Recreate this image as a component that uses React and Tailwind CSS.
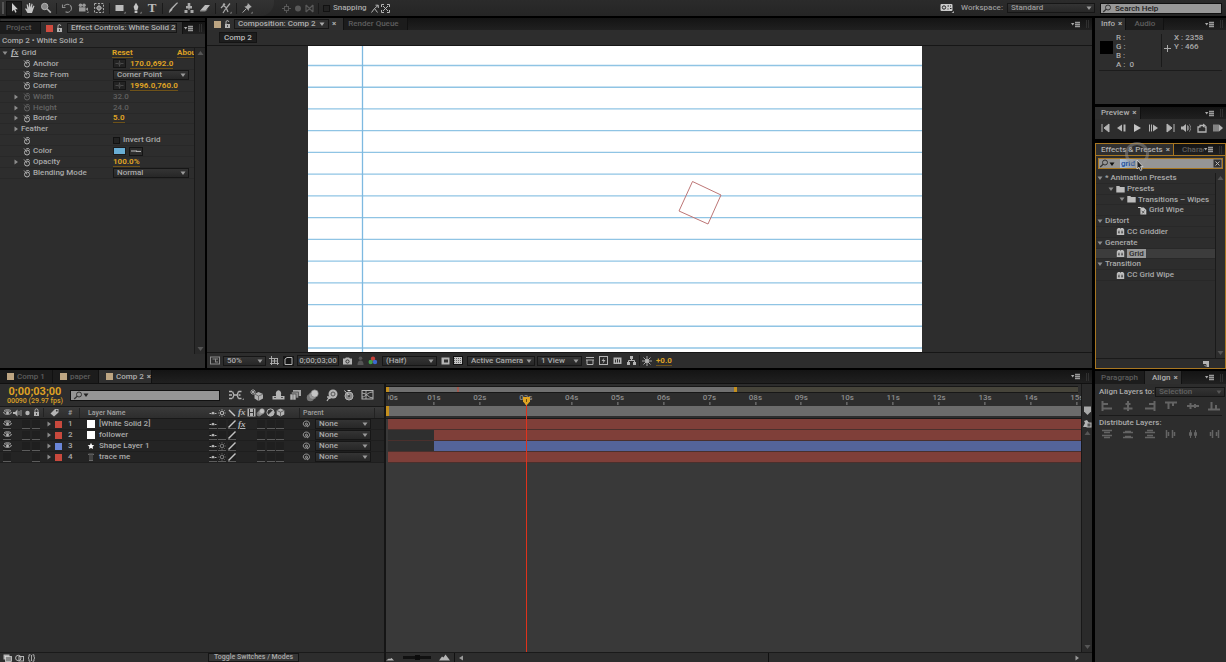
import React, { useState } from "react";

const Svg = ({ w = 12, h = 12, className = "", children }) => (
  <svg width={w} height={h} viewBox={`0 0 ${w} ${h}`} className={`shrink-0 ${className}`} fill="none" stroke="none" aria-hidden="true">
    {children}
  </svg>
);

const C = "#b4b4b4";

// ---------- small shared icons ----------
const Tri = ({ open, color = "#8c8c8c" }) => (
  <Svg w={6} h={6}>{open ? <path d="M0.5 1.5h5L3 5z" fill={color} /> : <path d="M1.5 0.5v5L5 3z" fill={color} />}</Svg>
);
const Up = () => <Svg w={7} h={6}><path d="M0.5 5h6L3.5 1z" fill="#555" /></Svg>;
const Down = () => <Svg w={7} h={6}><path d="M0.5 1h6L3.5 5z" fill="#555" /></Svg>;
const Watch = ({ dim }) => (
  <Svg w={8} h={9} className={dim ? "opacity-40" : ""}>
    <circle cx="4" cy="5.5" r="2.5" stroke={C} />
    <path d="M4 5.5L3 4M1 1.5l1.8 1.8M3.3 1.6h2.6M6.2 2.4l.8.8" stroke={C} strokeWidth="0.9" />
  </Svg>
);
const Target = () => (
  <span className="flex h-[9px] w-[13px] shrink-0 items-center justify-center border border-[#141414] bg-[#232323]">
    <Svg w={9} h={7}><path d="M0.5 3.5h8M4.5 0.5v6" stroke="#4a4a4a" /><circle cx="4.5" cy="3.5" r="1.5" fill="#414141" /></Svg>
  </span>
);
const Lock = ({ closed }) => (
  <Svg w={7} h={9}>
    <rect x="1" y="4" width="5" height="4" fill={C} />
    <path d={closed ? "M2 4V2.4a1.5 1.5 0 0 1 3 0V4" : "M2 4V2.2a1.4 1.4 0 0 1 2.8-.3"} stroke={C} />
    <path d="M3.5 5v2" stroke="#333" strokeWidth="0.8" />
  </Svg>
);
const MenuIcon = () => (
  <Svg w={9} h={7}><path d="M0 2h3.4L1.7 4.4z" fill="#aaa" /><path d="M4 1.5h5M4 3.5h5M4 5.5h5" stroke="#999" strokeWidth="1.6" /></Svg>
);
const Search = () => (
  <Svg w={10} h={9}><circle cx="6" cy="3.5" r="2.5" stroke="#333" /><path d="M4.2 5.2L1.2 8" stroke="#333" strokeWidth="1.2" /></Svg>
);
const Eye = () => (
  <Svg w={9} h={7}>
    <path d="M0.5 3.8C2.5 1.2 6.5 1.2 8.5 3.8 6.5 6 2.5 6 .5 3.8z" stroke={C} strokeWidth="0.9" />
    <circle cx="4.5" cy="3.7" r="1.5" fill={C} /><path d="M1 1.6C3 .4 6 .4 8 1.6" stroke={C} strokeWidth="0.8" />
  </Svg>
);
const Shy = () => <Svg w={8} h={7}><path d="M0.5 4.5h1.5M6 4.5h1.5" stroke={C} /><path d="M2.4 4.6a1.6 1.8 0 0 1 3.2 0v.6H2.4z" fill={C} /></Svg>;
const Sun = ({ dim }) => (
  <Svg w={8} h={8}>
    <circle cx="4" cy="4" r="1.7" stroke={dim ? "#777" : C} strokeWidth="1.1" />
    <path d="M4 .2v1.2M4 6.6v1.2M.2 4h1.2M6.6 4h1.2M1.3 1.3l.7.7M6 6l.7.7M1.3 6.7L2 6M6 2l.7-.7" stroke={dim ? "#777" : C} strokeWidth="0.8" />
  </Svg>
);
const Fx = ({ u }) => (
  <span className={`font-['Liberation_Serif',serif] text-[9px] leading-[9px] font-bold italic text-[#b4b4b4] ${u ? "underline" : ""}`}>fx</span>
);
const Cube = () => (
  <Svg w={9} h={9}>
    <path d="M4.5 .5L8.3 2.3v4.2L4.5 8.5.7 6.5V2.3z" fill={C} /><path d="M.9 2.4l3.6 1.8 3.6-1.8M4.5 4.2v4.2" stroke="#444" strokeWidth="0.7" />
  </Svg>
);
const Blur = ({ size = 9 }) => (
  <svg width={size} height={size} viewBox="0 0 12 12" className="shrink-0">
    <circle cx="4" cy="8" r="3.3" fill="#777" /><circle cx="6" cy="6.2" r="3.3" fill="#999" stroke="#666" strokeWidth="0.5" /><circle cx="8" cy="4.2" r="3.4" fill="#c4c4c4" stroke="#666" strokeWidth="0.5" />
  </svg>
);
const Film = () => (
  <Svg w={9} h={9}><rect x="0.5" y="0.5" width="8" height="8" fill={C} /><path d="M2.5 1v7M6.5 1v7" stroke="#333" /><path d="M3 4.5h3" stroke="#333" /></Svg>
);
const Frames = () => (
  <Svg w={13} h={12}><rect x="4" y="1" width="8" height="6" fill="#a8a8a8" /><rect x="2.5" y="3" width="7" height="6" fill="#929292" stroke="#333" strokeWidth="0.6" /><rect x="1" y="5" width="6" height="6" fill="#b5b5b5" stroke="#333" strokeWidth="0.6" /><path d="M4 5v6" stroke="#555" strokeWidth="0.6" /></Svg>
);
const Swirl = () => (
  <Svg w={9} h={8}><path d="M5.2 4.6a1 1 0 1 1-.4-1.5c1.3.8.8 3-1 3.1C.7 6.3.4 2 3.4 1.2 6.3.5 8.4 3 7.2 5.4L5 7" stroke="#aaa" strokeWidth="0.9" /></Svg>
);
const FxFile = () => (
  <Svg w={9} h={9}><path d="M0.8 2.5L2 1h2l.5 1L5 1h2l1.2 1.5V8H.8z" fill="#bdbdbd" /><path d="M3 3.6v3M6 3.6v3M2 5.2h1.5M5.3 5.2H7" stroke="#3a3a3a" strokeWidth="0.8" /></Svg>
);
const Folder = () => <Svg w={9} h={8}><path d="M0.3 7.5V1h3l.8 1h4.6v5.5z" fill="#bdbdbd" /></Svg>;
const PresetFile = () => (
  <Svg w={9} h={9}><path d="M2.4 1.5h3.4L8.3 4v4.6H2.4z" fill="#c4c4c4" /><path d="M3.6 5l2.8 2M6.6 4.4L4 7.6" stroke="#444" strokeWidth="0.8" /><path d="M0 1.5h3" stroke="#ccc" /></Svg>
);
const Chip = ({ c = "bg-[#bda582]" }) => <span className={`h-[7px] w-[7px] shrink-0 ${c}`} />;

// ---------- shared controls ----------
const Select = ({ label, options, className = "", dim }) => (
  <span className={`relative flex h-[10px] items-center border border-[#161616] bg-linear-to-b from-[#343434] to-[#272727] ${className}`}>
    <select aria-label={label} className={`h-full w-full appearance-none bg-transparent pl-[3px] leading-[8px] outline-none ${dim ? "text-[#626262]" : ""}`}>
      {options.map((o) => <option key={o}>{o}</option>)}
    </select>
    <span className="pointer-events-none absolute right-[2px]"><Tri open color={dim ? "#555" : "#9a9a9a"} /></span>
  </span>
);

const PanelEnd = () => (
  <span className="ml-auto flex items-center gap-[6px] pr-[3px]">
    <button aria-label="Panel menu" className="flex"><MenuIcon /></button>
    <span className="h-[8px] w-[3px] border-x border-[#303030]" />
  </span>
);

const TabBar = ({ children, className = "" }) => (
  <div className={`flex h-[12px] shrink-0 items-stretch bg-linear-to-b from-[#141414] to-[#202020] ${className}`}>{children}</div>
);

const Tab = ({ active, children, className = "" }) => (
  <button className={`flex shrink-0 items-center gap-[3px] whitespace-nowrap border-r border-[#111] ${active ? "bg-[#2f2f2f] text-[#b0b0b0]" : "bg-[#1c1c1c] text-[#5e5e5e]"} ${className}`}>
    {children}
  </button>
);

const X = () => <span className="font-bold">×</span>;

// ---------- toolbar ----------
const tools = [
  ["Selection", <path d="M4 1v8.5l2-1.8 1.3 3 1.3-.6-1.3-2.9h2.6z" fill="#ccc" />],
  ["Hand", <path d="M3.5 11L1 6.8l1-.6 1.4 1.4L2.6 2.5l1-.2 1.1 3.4L5 1h1.1l.3 4.6L7.6 1.6l1 .3-.7 4.3 1.7-2.6.9.5L8.9 8.5 8 11z" fill="#c4c4c4" />],
  ["Zoom", <><circle cx="4.7" cy="4.5" r="3.2" fill="#888" stroke={C} /><path d="M7.2 7l3.6 3.6" stroke={C} strokeWidth="1.6" /></>],
  null,
  ["Rotation", <path d="M3 4.2A4 4 0 1 1 4.5 9.8M1.5 2.5v3h3" stroke="#8c8c8c" strokeWidth="1.1" strokeDasharray="6 .8" />],
  ["Camera", <><circle cx="3.5" cy="3.3" r="1.8" fill="#999" /><circle cx="7" cy="3.3" r="1.8" fill="#999" /><path d="M2 5.2h6.5v4.3H2zM8.5 7L11 5.5v3.6z" fill="#999" /><path d="M9.5 11h2V9z" fill="#888" /></>],
  ["Pan Behind", <><rect x="1.5" y="1.5" width="9" height="9" stroke="#aaa" strokeDasharray="2 1.4" /><circle cx="6" cy="6" r="2" stroke="#bbb" /><path d="M6 2.6v6.8M2.6 6h6.8" stroke="#bbb" strokeWidth="0.7" /></>],
  null,
  ["Rectangle", <><rect x="1.5" y="3" width="8" height="6" fill="#bbb" /><path d="M9.7 11.4h2v-2z" fill="#888" /></>],
  ["Pen", <><path d="M6 .8l2.4 4L7.4 8H4.6L3.6 4.8zM4.6 8.6h2.8V11H4.6z" fill="#c4c4c4" /><path d="M9.7 11.4h2v-2z" fill="#888" /></>],
  ["Type", null],
  null,
  ["Brush", <path d="M10.6 1L5.5 6.6 4.6 8.5l-2.4 2 .8-2.8 1.5-1.6L10 .6z" fill="#bbb" stroke="#bbb" strokeWidth="0.5" />],
  ["Clone Stamp", <path d="M4.7 1h2.6v3H9v2.5H3V4h1.7zM5.5 6h1v2h-1zM1.5 8h3v3h-3zM7.5 8h3v3h-3z" fill="#aaa" />],
  ["Eraser", <><path d="M1 8.8L6 3h5L6.5 8.8z" fill="#bbb" /><path d="M1 9h5.5L8 7.4" stroke="#888" /></>],
  null,
  ["Roto Brush", <><path d="M10 1.5L5.5 7 3 11M3.4 3.5L6 5.5 8 10M1 6l2.4-2.5" stroke="#aaa" strokeWidth="1.2" /><circle cx="4" cy="2.4" r="1.2" fill="#aaa" /><path d="M9.7 11.4h2v-2z" fill="#888" /></>],
  null,
  ["Puppet Pin", <><path d="M6.8 1l4 4-1.4.4-1.6 1.7.2 1.8L3.4 4.4l1.8-.1 1.4-1.6z" fill="#aaa" /><path d="M5 7L1.6 10.6" stroke="#aaa" /><path d="M9.7 11.4h2v-2z" fill="#888" /></>],
];

const Toolbar = () => (
  <header className="flex h-[17px] shrink-0 items-center border-b border-black bg-linear-to-b from-[#2b2b2b] to-[#252525]">
    <div className="flex h-full w-[274px] shrink-0 items-center rounded-br-[14px] bg-linear-to-b from-[#333] to-[#2a2a2a]">
      <span className="mr-[2px] ml-[2px] h-[12px] w-[2px] bg-[#555]" />
      {tools.map((t, i) =>
        t ? (
          <button key={i} aria-label={t[0]} className={`flex h-[15px] w-[16px] items-center justify-center ${i === 0 ? "border border-[#111] bg-[#1b1b1b]" : ""}`}>
            {t[1] ? <Svg>{t[1]}</Svg> : <span className="font-['Liberation_Serif',serif] text-[13px] leading-[12px] font-bold text-[#bbb]">T</span>}
          </button>
        ) : (
          <span key={i} className="mx-[2px] h-[11px] w-px bg-[#1a1a1a]" />
        )
      )}
    </div>
    <div className="flex items-center gap-[3px] pl-[8px] opacity-35">
      <Svg w={9} h={9}><path d="M4.5 0v9M0 4.5h9" stroke={C} /><rect x="2.5" y="2.5" width="4" height="4" fill="#333" stroke={C} /></Svg>
      <Svg w={8} h={9}><circle cx="4" cy="4.5" r="3" fill={C} /></Svg>
      <Svg w={9} h={9}><path d="M1 1v7M8 1v7M1 1l7 7M8 1L1 8" stroke={C} strokeWidth="1.2" /></Svg>
    </div>
    <span className="mx-[4px] h-[11px] w-px bg-[#1a1a1a]" />
    <label className="flex items-center gap-[3px]">
      <input type="checkbox" className="h-[7px] w-[7px] appearance-none border border-[#111] bg-[#222] checked:bg-[#999]" />
      Snapping
    </label>
    <div className="flex gap-[2px] pl-[4px]">
      <Svg w={8} h={9}><path d="M0.5 8.5l3-4 3 4M3.5 4.5L7 1.5M4.5 1.2h2.8V4" stroke={C} /></Svg>
      <Svg w={9} h={9}><path d="M0.5 3V.5H3M6 .5h2.5V3M8.5 6v2.5H6M3 8.5H.5V6M2 2l5 5M7 2L2 7" stroke={C} /></Svg>
    </div>
    <div className="ml-auto flex items-center pr-[4px] text-[#9a9a9a]">
      <Svg w={14} h={10}><rect x="0.5" y="1" width="12" height="7" rx="1" fill="#ccc" /><circle cx="4" cy="4.5" r="1.7" stroke="#222" /><path d="M7.5 3h1.5M10 5.5h1.5M10 3h1M7.5 6h1" stroke="#222" /><path d="M11.5 10H14V8z" fill="#aaa" /></Svg>
      <span className="pr-[4px] pl-[7px]">Workspace:</span>
      <Select label="Workspace" options={["Standard", "Animation", "Effects"]} className="w-[88px]" />
      <label className="ml-[5px] flex h-[11px] w-[122px] items-center border border-[#111] bg-[#989898] pl-px">
        <Search />
        <input aria-label="Search Help" placeholder="Search Help" className="w-full pl-[3px] leading-[9px] outline-none placeholder:text-[#1c1c1c]" />
      </label>
    </div>
  </header>
);

// ---------- effect controls ----------
const Val = ({ children, dim }) => (
  <button className={dim ? "text-[#606060]" : "border-b border-[#6e5219] leading-[9px] font-bold text-[#dda125]"}>{children}</button>
);

const effectRows = [
  { name: "Anchor", watch: true, value: <><Target /><span className="w-[4px]" /><Val>170.0,692.0</Val></> },
  { name: "Size From", watch: true, value: <Select label="Size From" options={["Corner Point", "Width Slider"]} className="w-[76px]" /> },
  { name: "Corner", watch: true, value: <><Target /><span className="w-[4px]" /><Val>1996.0,760.0</Val></> },
  { name: "Width", watch: true, tri: true, dim: true, value: <Val dim>32.0</Val> },
  { name: "Height", watch: true, tri: true, dim: true, value: <Val dim>24.0</Val> },
  { name: "Border", watch: true, tri: true, value: <Val>5.0</Val> },
  { name: "Feather", tri: true },
  {
    name: "", watch: true,
    value: (
      <label className="flex items-center gap-[3px]">
        <input type="checkbox" className="h-[7px] w-[7px] appearance-none border border-[#111] bg-[#222] checked:bg-[#999]" />
        Invert Grid
      </label>
    ),
  },
  {
    name: "Color", watch: true,
    value: (
      <>
        <input type="button" aria-label="Color" className="h-[8px] w-[13px] border border-[#1b1b1b] bg-[#69aed5]" />
        <button aria-label="Eyedropper" className="ml-[3px] flex h-[9px] w-[14px] items-center justify-center border border-[#141414]">
          <Svg w={10} h={4}><path d="M0 2h6M5 2.4h5" stroke="#bbb" /></Svg>
        </button>
      </>
    ),
  },
  { name: "Opacity", watch: true, tri: true, value: <Val>100.0%</Val> },
  { name: "Blending Mode", watch: true, value: <Select label="Blending Mode" options={["Normal", "Add", "Multiply"]} className="w-[76px]" /> },
];

const EffectControls = () => (
  <section className="flex w-[205px] shrink-0 flex-col bg-[#2d2d2d]">
    <div className="h-[4px] border-b border-black bg-[#151515] pt-px"><div className="h-[2px] w-[190px] rounded-full bg-[#353535]" /></div>
    <TabBar>
      <Tab className="w-[41px] px-[6px]">Project</Tab>
      <Tab active className="px-[5px]">
        <Chip c="bg-[#cf4b3f]" /><Lock />
        <span className="ml-px flex h-[10px] w-[110px] items-center border border-[#161616] pl-[3px]">Effect Controls: White Solid 2</span>
      </Tab>
      <PanelEnd />
    </TabBar>
    <div className="flex h-[14px] items-center border-b border-[#1a1a1a] pl-[2px]">Comp 2 • White Solid 2</div>
    <div className="flex flex-1">
      <div className="flex-1 overflow-hidden">
        <div className="grid h-[131px] grid-rows-12">
          <div className="flex items-center border-b border-[#282828] bg-[#2a2a2a] pl-[2px]">
            <span className="flex w-[110px] items-center gap-[3px]"><Tri open /><Fx u /><span>Grid</span></span>
            <Val>Reset</Val>
            <span className="ml-auto w-[17px] overflow-hidden"><Val>About...</Val></span>
          </div>
          {effectRows.map((r, i) => (
            <div key={i} className={`flex items-center border-b border-[#282828] pl-[13px] ${r.dim ? "text-[#646464]" : ""}`}>
              <span className="flex w-[100px] shrink-0 items-center whitespace-nowrap">
                <span className="flex w-[8px]">{r.tri && <Tri />}</span>
                {r.watch && <span className="flex w-[12px] pl-[2px]"><Watch dim={r.dim} /></span>}
                <span>{r.name}</span>
              </span>
              {r.value}
            </div>
          ))}
        </div>
      </div>
      <div className="mb-[14px] flex w-[11px] flex-col items-center justify-between border-l border-[#1a1a1a] bg-[#292929] py-[2px]"><Up /><Down /></div>
    </div>
  </section>
);

// ---------- composition viewer ----------
const lines = Array.from({ length: 14 }, (_, i) => 19.5 + i * 21.73);

const CompViewer = () => (
  <section className="flex min-w-0 flex-1 flex-col bg-[#2d2d2d]">
    <TabBar>
      <Tab active className="px-[7px]">
        <Chip /><Lock />
        <span className="flex h-[10px] w-[95px] items-center justify-between border border-[#161616] px-[3px]">Composition: Comp 2<Tri open color="#aaa" /></span>
        <X />
      </Tab>
      <Tab className="w-[64px] pl-[4px]">Render Queue</Tab>
      <PanelEnd />
    </TabBar>
    <div className="flex h-[16px] shrink-0 items-center border-b border-[#161616] pl-[12px]">
      <button className="h-[11px] w-[38px] border border-[#141414] bg-[#1d1d1d] leading-[9px] text-[#bbb]">Comp 2</button>
    </div>
    <div className="flex-1 overflow-hidden pl-[101px]">
      <svg width="614" height="306" viewBox="0 0 614 306" className="bg-white" role="img" aria-label="Lined paper">
        {lines.map((y) => <path key={y} d={`M0 ${y}H614`} stroke="#8fc4e4" strokeWidth="1.3" />)}
        <path d="M54.5 0V306" stroke="#7db9e0" strokeWidth="1.3" />
        <path d="M384.5 135.5L413 149 400 178 371 165z" fill="none" stroke="#bd7676" />
      </svg>
    </div>
    <div className="flex h-[16px] shrink-0 items-center border-t border-[#161616] pl-[3px]">
      <Svg w={10} h={9}><rect x="0.5" y="1" width="9" height="7" stroke="#8a8a8a" /><path d="M2.5 3h3v3M5 3h3M5 6h3" stroke="#8a8a8a" /></Svg>
      <Select label="Magnification" options={["50%", "100%"]} className="ml-[3px] w-[43px]" />
      <span className="flex items-center gap-[3px] px-[3px]">
        <Svg w={11} h={10}><path d="M0 2.5h9M2.5 0v9M8.5 2v7M1 7.5h9M5.5 3v4M3 5h5" stroke={C} strokeWidth="0.9" /></Svg>
        <Svg w={11} h={10}><rect width="11" height="10" fill="#161616" /><path d="M2 8.5V3L4 1.5h5v7z" stroke={C} /></Svg>
      </span>
      <button className="h-[11px] w-[42px] border border-[#161616] leading-[9px]">0;00;03;00</button>
      <span className="flex w-[43px] items-center justify-between px-[4px]">
        <Svg w={9} h={8}><path d="M0 1.5h2L3 .5h3l1 1h2v6H0z" fill={C} /><circle cx="4.5" cy="4.5" r="1.6" fill={C} stroke="#333" /></Svg>
        <Svg w={7} h={9}><circle cx="3.5" cy="2.3" r="1.8" fill="#555" /><path d="M0.5 9c0-3 .8-4.5 3-4.5S6.5 6 6.5 9z" fill="#555" /></Svg>
        <Svg w={10} h={9}><circle cx="5" cy="2.8" r="2.2" fill="#c8423a" /><circle cx="2.7" cy="6" r="2.2" fill="#43a04b" /><circle cx="7" cy="6" r="2.2" fill="#3e68cf" /></Svg>
      </span>
      <Select label="Resolution" options={["(Half)", "Full"]} className="w-[55px]" />
      <span className="flex w-[30px] items-center justify-between px-[4px]">
        <Svg w={9} h={8}><rect x="0.5" y="0.5" width="8" height="7" fill={C} /><rect x="3" y="2.5" width="4" height="3" fill="#333" /></Svg>
        <Svg w={10} h={9}>
          <rect width="10" height="9" fill="#111" /><rect x="1" y="1" width="8" height="7" fill="#c4c4c4" />
          <path d="M1 2.5h8M1 4.5h8M1 6.5h8" stroke="#666" strokeDasharray="1 1" />
        </Svg>
      </span>
      <Select label="3D View" options={["Active Camera", "Front"]} className="w-[68px]" />
      <Select label="View Layout" options={["1 View", "2 Views"]} className="ml-[2px] w-[45px]" />
      <span className="flex w-[57px] items-center justify-between pr-[3px] pl-[4px]">
        <Svg w={8} h={9}><path d="M0 1.5h8M0 4h8M1 4v4.5h6V4" stroke={C} /></Svg>
        <Svg w={9} h={9}><rect x="0.5" y="0.5" width="8" height="8" stroke={C} /><path d="M5.5 1.5L2.5 5h2L3.5 8l3-4h-2z" fill={C} /></Svg>
        <Svg w={9} h={9}><rect x="0.5" y="1.5" width="8" height="6.5" fill={C} /><path d="M2.5 3.5v3M4.5 3v3.5M6.5 3.5v3" stroke="#333" /></Svg>
        <Svg w={9} h={9}><path d="M3 0h3v3H3zM0 6h3v3H0zM6 6h3v3H6z" fill={C} /><path d="M4.5 3v1.5M1.5 6V4.5h6V6" stroke={C} /></Svg>
      </span>
      <span className="mr-[2px] h-[11px] w-px bg-[#1a1a1a]" />
      <Svg w={10} h={10}><circle cx="5" cy="5" r="2" fill={C} /><path d="M5 0v10M0 5h10M1.5 1.5l7 7M8.5 1.5l-7 7" stroke={C} strokeWidth="0.9" /></Svg>
      <span className="flex pl-[4px]"><Val>+0.0</Val></span>
    </div>
  </section>
);

// ---------- timeline ----------
const layers = [
  { n: 1, name: "[White Solid 2]", label: "bg-[#c8493d]", bar: "bg-[#7f3f39]", icon: "solid", eye: true, fx: true, start: 0 },
  { n: 2, name: "follower", label: "bg-[#c8493d]", bar: "bg-[#7f3f39]", icon: "solid", eye: true, start: 1 },
  { n: 3, name: "Shape Layer 1", label: "bg-[#6a86d8]", bar: "bg-[#54649a]", icon: "star", eye: true, sun: true, start: 1 },
  { n: 4, name: "trace me", label: "bg-[#c8493d]", bar: "bg-[#7f3f39]", icon: "text", sun: true, start: 0 },
];
const DURATION = 15.09;
const pct = (s) => `${(s / DURATION) * 100}%`;

const Slot = ({ children }) => (
  <span className="flex h-[9px] w-[8px] items-center justify-center border-b border-[#5c5c5c] bg-[#1f1f1f]">{children}</span>
);
const Slash = ({ back }) => <Svg w={8} h={8}><path d={back ? "M1 1l6 6" : "M0.5 7.5l7-7"} stroke="#c4c4c4" strokeWidth="1.4" /></Svg>;

const LayerTable = () => (
  <table className="w-full table-fixed border-collapse text-left">
    <colgroup>
      <col className="w-[43px]" /><col className="w-[22px]" /><col className="w-[14px]" /><col className="w-[127px]" /><col className="w-[93px]" /><col />
    </colgroup>
    <thead className="bg-linear-to-b from-[#3a3a3a] to-[#2c2c2c] text-[7px] text-[#a0a0a0]">
      <tr className="h-[12px] border-y border-[#181818]">
        <th className="p-0" aria-label="Video, audio, solo, lock">
          <span className="flex items-center gap-px pl-[3px]">
            <Eye />
            <Svg w={9} h={8}><path d="M0 3h2l2.5-2.5v7L2 5H0z" fill={C} /><path d="M6 2v4M8 1v6" stroke={C} strokeWidth="0.8" /></Svg>
            <Svg w={9} h={8}><circle cx="4.5" cy="4" r="2.2" fill={C} /></Svg>
            <Lock closed />
          </span>
        </th>
        <th className="p-0" aria-label="Label">
          <span className="flex justify-center border-l border-[#222]"><Svg w={9} h={9}><path d="M0.5 5.5L5 1h3.5v3.5L4 8.5z" fill={C} /><circle cx="6.8" cy="2.7" r="0.9" fill="#333" /></Svg></span>
        </th>
        <th className="p-0 pl-[3px] font-medium">#</th>
        <th className="p-0 font-medium"><span className="block border-l border-[#222] pl-[8px]">Layer Name</span></th>
        <th className="p-0" aria-label="Switches">
          <span className="ml-[2px] grid w-[77px] grid-cols-8 items-center justify-items-center">
            <Shy /><Sun /><Slash back /><Fx /><Film /><Blur />
            <Svg w={9} h={9}><circle cx="4.5" cy="4.5" r="3.6" fill="#333" stroke={C} /><path d="M2 7L7 2A3.5 3.5 0 0 1 2 7z" fill={C} /></Svg>
            <Cube />
          </span>
        </th>
        <th className="p-0 font-medium"><span className="mr-[9px] block border-x border-[#222] pl-[3px]">Parent</span></th>
      </tr>
    </thead>
    <tbody>
      {layers.map((l) => (
        <tr key={l.n} className="h-[11px] border-b border-[#1e1e1e] bg-[#242424]">
          <td className="p-0">
            <span className="flex pl-[3px]"><Slot>{l.eye && <Eye />}</Slot><span className="w-[11px]" />{l.n === 4 ? <span className="w-[8px]" /> : <Slot />}<span className="w-[2px]" /><Slot /></span>
          </td>
          <td className="p-0"><span className="flex items-center gap-[3px] pl-[3px]"><Tri /><Chip c={l.label} /></span></td>
          <td className="p-0 pl-[3px]">{l.n}</td>
          <td className="p-0">
            <span className="flex items-center pl-[8px]">
              <span className="flex w-[12px]">
                {l.icon === "solid" && <span className="h-[8px] w-[8px] bg-white" />}
                {l.icon === "star" && <Svg w={8} h={8}><path d="M4 .8l1 2.2 2.3.2-1.7 1.6.5 2.3L4 5.9 1.9 7.1l.5-2.3L.7 3.2 3 3z" fill="#fff" /></Svg>}
                {l.icon === "text" && <Svg w={8} h={8}><path d="M1.5 2V1h5v1M3 1v6.5M5 1v6.5M2 7.5h4" stroke="#777" strokeWidth="0.8" /></Svg>}
              </span>
              {l.name}
            </span>
          </td>
          <td className="p-0">
            <span className="ml-[2px] grid w-[77px] grid-cols-8 items-center justify-items-center">
              <Slot><Shy /></Slot><Slot>{l.sun && <Sun dim />}</Slot><Slot><Slash /></Slot>
              {l.fx ? <Fx u /> : <span />}<span /><Slot /><Slot /><Slot />
            </span>
          </td>
          <td className="p-0">
            <span className="flex items-center gap-[4px] pl-[3px]"><Swirl /><Select label={`Parent of ${l.name}`} options={["None"]} className="w-[56px]" /></span>
          </td>
        </tr>
      ))}
    </tbody>
  </table>
);

const Timeline = () => {
  const [query, setQuery] = useState("");

  return (
    <section className="flex min-h-0 flex-1 flex-col bg-[#2d2d2d]">
      <TabBar className="!h-[14px] border-b border-[#111]">
        <Tab className="w-[53px] pl-[7px]"><Chip />Comp 1</Tab>
        <Tab className="w-[46px] pl-[7px]"><Chip />paper</Tab>
        <Tab active className="w-[53px] pl-[7px]"><Chip />Comp 2<X /></Tab>
        <PanelEnd />
      </TabBar>
      <div className="flex min-h-0 flex-1">
        <div className="flex w-[384px] shrink-0 flex-col">
          <div className="flex h-[22px] shrink-0 items-center">
            <button className="flex w-[70px] flex-col items-center text-[#dda125]">
              <span className="text-[11px] leading-[11px] font-bold">0;00;03;00</span>
              <span className="text-[7px] leading-[8px]">00090 (29.97 fps)</span>
            </button>
            <label className="flex h-[11px] w-[150px] items-center border border-[#111] bg-[#959595] pl-[2px]">
              <Search /><Tri open color="#222" />
              <input aria-label="Search layers" value={query} onChange={(e) => setQuery(e.target.value)} className="w-full text-[#111] outline-none" />
            </label>
            <span className="flex flex-1 items-center pl-[8px]">
              <Svg w={16} h={12}><path d="M1 2.500h3M1 6h3M1 9.5h3M4.5 2.5L6 6h3l1.5-3.5M4.5 9.5L6 6M9 6l1.5 3.5M10.5 2.5h3M10.5 6h2M10.5 9.5h3" stroke={C} strokeWidth="1.3" /><path d="M14 11h2V9z" fill="#888" /></Svg>
              <span className="flex w-[25px] justify-center"><Svg w={14} h={12}><path d="M3 0v6M0 3h6M1 1l4 4M5 1L1 5" stroke={C} strokeWidth="0.8" /><path d="M8.5 3L13 5v4.5L8.5 12 4.5 9.5V5z" fill="#b0b0b0" /><path d="M5 5.2L8.5 7 13 5.2M8.5 7v5" stroke="#555" strokeWidth="0.7" /></Svg></span>
              <span className="ml-[3px] flex items-center gap-[4px]">
                <Svg w={13} h={12}><path d="M4 6a2.7 3.5 0 1 1 5 0v1H4z" fill={C} /><path d="M0.5 7h12v3.5H.5z" fill={C} /><path d="M2 8.5h2M9 8.5h2" stroke="#555" /></Svg>
                <Frames />
                <Blur size={13} />
              </span>
              <span className="ml-[6px] flex items-center gap-[4px]">
                <Svg w={14} h={13}><circle cx="8" cy="5" r="4.5" fill={C} /><circle cx="8" cy="5" r="2" stroke="#555" /><path d="M4.5 8L2 12M2 8h3v2" stroke={C} strokeWidth="1.3" /></Svg>
                <Svg w={12} h={12}><circle cx="6" cy="7" r="4" fill="#888" stroke={C} /><path d="M6 7L4.5 4.5M4.5 1.5h3M1.5 1.5L3 3.5" stroke="#ddd" /><circle cx="6" cy="7" r="1" fill="#333" /></Svg>
                <span className="pl-[2px]"><Svg w={14} h={12}><rect x="1" y="1.5" width="11" height="8.5" stroke={C} /><path d="M1 8c4 0 5-5 11-5M1 4c5 0 6 5 11 5M5 1.5v8.5" stroke={C} strokeWidth="0.9" /></Svg></span>
              </span>
            </span>
          </div>
          <LayerTable />
          <div className="flex-1" />
          <div className="flex h-[10px] shrink-0 items-center gap-[3px] border-t border-[#1a1a1a] pl-[3px]">
            <Svg w={9} h={8}><rect x="0.5" y="0.5" width="6" height="5" fill={C} /><rect x="2.5" y="2.5" width="6" height="5" fill="#888" stroke="#ddd" strokeWidth="0.7" /></Svg>
            <Svg w={9} h={8}><circle cx="3.3" cy="4" r="2.7" stroke={C} /><rect x="4" y="2.5" width="4.5" height="4.5" stroke={C} /></Svg>
            <Svg w={9} h={8}><path d="M3.5.8H2v2.4L1 4l1 .8v2.4h1.5M5.5.8H7v2.4L8 4l-1 .8v2.4H5.5M4.5 1v6" stroke={C} strokeWidth="0.9" /></Svg>
            <button className="ml-[169px] flex h-[9px] w-[91px] shrink-0 items-center justify-center border border-[#151515] bg-[#363636] text-[7px] leading-[9px] whitespace-nowrap">Toggle Switches / Modes</button>
          </div>
        </div>
        <div className="flex min-w-0 flex-1 flex-col border-l-2 border-[#151515]">
          <div className="flex min-h-0 flex-1">
            <div className="flex min-w-0 flex-1 flex-col bg-[#393939]">
              <div className="flex h-[35px] shrink-0 flex-col border-b border-[#191919] bg-[#2d2d2d]">
                <div className="mt-[2px] mr-[3px] flex h-[7px] border-y border-[#171717] bg-[#46443a]">
                  <span className="flex w-[351px] border-x-[3px] border-[#c48f1d] bg-[#707070]"><span className="ml-[68px] w-[2px] bg-[#a05a50]" /></span>
                </div>
                <div className="relative ml-[2px] h-[13px] overflow-hidden text-[#8c8c8c]">
                  {Array.from({ length: 16 }, (_, s) => (
                    <span key={s} className="absolute top-0 flex -translate-x-1/2 flex-col items-center leading-[9px]" style={{ left: pct(s) }}>
                      {s === 0 ? "0:00s" : `${String(s).padStart(2, "0")}s`}
                      <span className="h-[3px] w-px bg-[#888]" />
                    </span>
                  ))}
                </div>
                <div className="h-[10px] border-l-[3px] border-[#c48f1d] bg-[#6b6b6b]" />
              </div>
              <div className="relative ml-[2px] flex-1">
                {layers.map((l) => (
                  <div key={l.n} className="h-[11px] border-b border-[#4a302d] bg-[#2f2f2f]">
                    <div className={`h-[10px] ${l.bar}`} style={{ marginLeft: pct(l.start) }} />
                  </div>
                ))}
                {/* current time indicator */}
                <div className="absolute -top-[23px] bottom-0" style={{ left: pct(3) }}>
                  <div className="absolute top-[9px] bottom-0 left-0 border-l border-[#e0321c]" />
                  <div className="absolute top-0 -left-[4px]">
                    <Svg w={9} h={10}><path d="M1 1h7v4.5L4.5 9.5 1 5.5z" fill="#e0a422" /><path d="M4.5 3v3" stroke="#6b4d0c" /></Svg>
                  </div>
                </div>
              </div>
            </div>
            <div className="flex w-[11px] shrink-0 flex-col items-center border-l border-[#181818] bg-[#2a2a2a] pt-[21px] pb-[2px]">
              <Svg w={9} h={11}><path d="M1 1.5h7v5L4.5 10 1 6.5z" fill="#a8a8a8" /></Svg>
              <span className="mt-[3px] flex"><Svg w={10} h={9}><path d="M1 8l2-4-1-2 3-1 2 3-1 4z" fill={C} /><rect x="5" y="4" width="4" height="4" fill="#555" stroke={C} /></Svg></span>
              <span className="mt-[2px] flex"><Up /></span>
              <span className="mt-auto flex"><Down /></span>
            </div>
          </div>
          <div className="flex h-[10px] shrink-0 items-center border-t border-[#1a1a1a]">
            <Svg w={8} h={6}><path d="M0 5.5l3-2 1 .5 1.5-1L8 5.5z" fill={C} /></Svg>
            <input type="range" aria-label="Zoom timeline" defaultValue={50} className="ml-[9px] h-[3px] w-[28px] appearance-none bg-[#111] [&::-webkit-slider-thumb]:h-[5px] [&::-webkit-slider-thumb]:w-[5px] [&::-webkit-slider-thumb]:appearance-none [&::-webkit-slider-thumb]:bg-[#0c0c0c]" />
            <span className="ml-[8px] flex"><Svg w={11} h={7}><path d="M0 6.5l3-4 1.5 1L6.5.5l4.5 6z" fill={C} /></Svg></span>
            <span className="ml-[4px] flex h-full flex-1 items-center justify-between border-l border-[#111] pr-[12px] pl-[3px]">
              <span className="flex h-full w-1/2 items-center border-r border-[#111]"><Svg w={6} h={6}><path d="M5 .5v5L1 3z" fill="#999" /></Svg></span>
              <Tri color="#999" />
            </span>
          </div>
        </div>
      </div>
    </section>
  );
};

// ---------- right column ----------
const Info = () => (
  <section className="h-[86px] shrink-0 bg-[#2d2d2d]">
    <TabBar>
      <Tab active className="pr-[3px] pl-[6px]">Info<X /></Tab>
      <Tab className="w-[38px] justify-center">Audio</Tab>
      <PanelEnd />
    </TabBar>
    <div className="mx-[4px] flex h-[41px] border-b border-[#1c1c1c]">
      <span className="mt-[11px] ml-px h-[13px] w-[13px] bg-black" />
      <div className="flex w-[48px] flex-col pt-[3px] pl-[3px] leading-[9px]">
        <span>R :</span><span>G :</span><span>B :</span><span>A :&ensp;0</span>
      </div>
      <span className="mt-[4px] h-[33px] w-px bg-[#1a1a1a]" />
      <span className="mt-[15px] ml-[2px]"><Svg w={7} h={7}><path d="M3.5 0v7M0 3.5h7" stroke="#aaa" /></Svg></span>
      <div className="flex flex-col pt-[3px] pl-[3px] leading-[9px]">
        <span>X : 2358</span><span>Y : 466</span>
      </div>
    </div>
  </section>
);

const playback = [
  ["First frame", <path d="M2 1v8M9 1L4 5l5 4z" fill={C} stroke={C} />],
  ["Previous frame", <><path d="M6 1.5v7L1 5z" fill={C} /><path d="M8.5 1.5v7" stroke={C} strokeWidth="2" /></>],
  ["Play", <path d="M2 1l7 4-7 4z" fill="#c4c4c4" />],
  ["Next frame", <><path d="M5 1.5v7L10 5z" fill={C} /><path d="M1.5 1.5v7M3.5 1.5v7" stroke={C} /></>],
  ["Last frame", <path d="M9 1v8M2 1l5 4-5 4z" fill={C} stroke={C} />],
  ["Mute", <><path d="M0 3.5h2L5 1v8L2 6.5H0z" fill={C} /><path d="M6.5 2.5a3 3 0 0 1 0 5zM8 1.5a4 4 0 0 1 0 7" stroke="#999" strokeWidth="0.9" /></>],
  ["Loop", <><path d="M2.5 4H1v5h8V4H7.5M3 4.5V2.5h4" stroke={C} strokeWidth="1.3" /><path d="M6 .5l3 2-3 2z" fill={C} /></>],
  ["RAM Preview", <><path d="M1 1.5v7M3 1.5v7M5 1.5v7" stroke={C} strokeWidth="1.3" /><path d="M6 1.5L10 5 6 8.5z" fill={C} /></>],
];

const Preview = () => (
  <section className="mt-[3px] h-[32px] shrink-0 bg-[#2d2d2d]">
    <TabBar>
      <Tab active className="pr-[3px] pl-[6px]">Preview<X /></Tab>
      <PanelEnd />
    </TabBar>
    <div className="flex h-[18px] items-center justify-between pr-[3px] pl-[5px]">
      {playback.map(([name, d]) => <button key={name} aria-label={name}><Svg w={10} h={10}>{d}</Svg></button>)}
    </div>
  </section>
);

const tree = [
  { text: "* Animation Presets", pad: "pl-px", open: true },
  { text: "Presets", pad: "pl-[12px]", open: true, icon: <Folder /> },
  { text: "Transitions – Wipes", pad: "pl-[23px]", open: true, icon: <Folder /> },
  { text: "Grid Wipe", pad: "pl-[42px]", icon: <PresetFile /> },
  { text: "Distort", pad: "pl-px", open: true },
  { text: "CC Griddler", pad: "pl-[20px]", icon: <FxFile /> },
  { text: "Generate", pad: "pl-px", open: true },
  { text: "Grid", pad: "pl-[20px]", icon: <FxFile />, selected: true },
  { text: "Transition", pad: "pl-px", open: true },
  { text: "CC Grid Wipe", pad: "pl-[20px]", icon: <FxFile /> },
];

const EffectsPresets = () => {
  const [term, setTerm] = useState("grid");

  return (
    <section className="relative mt-[4px] flex h-[226px] shrink-0 flex-col border border-[#a87722] bg-[#2d2d2d]">
      <TabBar className="border-b border-[#a87722]">
        <Tab active className="border-r-[#a87722] pr-[3px] pl-[5px]">Effects &amp; Presets<X /></Tab>
        <span className="flex w-[34px] items-center overflow-hidden pl-[8px] text-[#5e5e5e]">Character</span>
        <PanelEnd />
      </TabBar>
      <label className="mx-[2px] mt-[2px] flex h-[11px] items-center border border-[#a87722] bg-[#959595]">
        <Search /><Tri open color="#111" />
        <input aria-label="Search effects" value={term} onChange={(e) => setTerm(e.target.value)} className="ml-[5px] w-full bg-linear-to-r from-[#a9c0dc] to-[#959595] to-20% pl-px leading-[9px] text-[#1d4f9c] outline-none" />
        <button aria-label="Clear" className="flex"><Svg w={9} h={9}><rect x="0.5" y="0.5" width="8" height="8" fill="#333" /><path d="M2.5 2.5l4 4M6.5 2.5l-4 4" stroke="#bbb" /></Svg></button>
      </label>
      <div className="mt-[4px] flex flex-1">
        <div className="flex-1">
          <div className="grid h-[108px] grid-rows-10">
            {tree.map((t) => (
              <div key={t.text} className={`flex items-center gap-[2px] border-b border-[#282828] whitespace-nowrap ${t.pad} ${t.selected ? "bg-[#3c3c3c]" : ""}`}>
                {t.open && <Tri open />}
                {t.icon}
                <span className={t.selected ? "bg-[#999] px-[2px] leading-[9px] text-[#2a2a2a]" : ""}>{t.text}</span>
              </div>
            ))}
          </div>
        </div>
        <div className="flex w-[10px] flex-col items-center justify-between border-l border-[#1a1a1a] py-[2px]"><Up /><Down /></div>
      </div>
      <div className="flex h-[10px] items-center justify-end border-t border-[#1a1a1a] pr-[15px]">
        <Svg w={8} h={8}><path d="M1 1h6v6H4L1 4z" fill={C} /><path d="M1 4.5h3V7" stroke="#333" /></Svg>
      </div>
      {/* pointer with click ring */}
      <div className="pointer-events-none absolute -top-[3px] left-[28px]">
        <Svg w={28} h={32}>
          <circle cx="13" cy="13" r="10.5" stroke="#999" strokeOpacity="0.45" strokeWidth="3" />
          <path d="M13 19v9l2-1.8 1.5 3.3 1.500-.7-1.4-3.2H19z" fill="#222" stroke="#ddd" strokeWidth="0.8" />
        </Svg>
      </div>
    </section>
  );
};

const alignIcons = [
  ["Align left", <path d="M1.5 0v10M2 3h5M2 7.5h9" strokeWidth="2" />],
  ["Align horizontal center", <path d="M6 0v10M3.5 3h5M1.5 7.5h9" strokeWidth="2" />],
  ["Align right", <path d="M10.5 0v10M5 3h5M1 7.5h9" strokeWidth="2" />],
  ["Align top", <path d="M0 1.5h12M3.5 2v6M8 2v3" strokeWidth="2" />],
  ["Align vertical center", <path d="M0 5h12M3.5 2v6M8 3v4" strokeWidth="2" />],
  ["Align bottom", <path d="M0 8.5h12M3.5 1v7M8 4v4" strokeWidth="2" />],
];
const distributeIcons = [
  ["Distribute top", <path d="M1 1.5h10M3 3.5h6M1 6.5h10M3 8.5h6" strokeWidth="1.5" />],
  ["Distribute vertical center", <path d="M3 2.5h6M1 3.5h10M3 7.5h6M1 8.5h10" strokeWidth="1.5" />],
  ["Distribute bottom", <path d="M3 1.5h6M1 3.5h10M3 6.5h6M1 8.5h10" strokeWidth="1.5" />],
  ["Distribute left", <path d="M1.5 1v8M3.5 3v4M7.5 1v8M9.5 3v4" strokeWidth="1.5" />],
  ["Distribute horizontal center", <path d="M3.5 1v8M2.5 3.5h2v3h-2zM8.5 1v8M7.5 3.5h2v3h-2z" />],
  ["Distribute right", <path d="M2.5 3v4M4.5 1v8M8.5 3v4M10.5 1v8" strokeWidth="1.5" />],
];

const IconRow = ({ items }) => (
  <div className="flex justify-between px-[6px]">
    {items.map(([name, d]) => (
      <button key={name} aria-label={name}><Svg w={12} h={10}><g stroke="#646464">{d}</g></Svg></button>
    ))}
  </div>
);

const Align = () => (
  <section className="mt-[2px] flex flex-1 flex-col bg-[#2d2d2d]">
    <TabBar className="!h-[13px]">
      <Tab className="w-[50px] justify-center">Paragraph</Tab>
      <Tab active className="pr-[3px] pl-[7px]">Align<X /></Tab>
      <PanelEnd />
    </TabBar>
    <div className="flex h-[16px] items-center justify-between pr-px pl-[4px] whitespace-nowrap">
      Align Layers to:
      <Select label="Align Layers to" options={["Selection", "Composition"]} className="w-[70px]" dim />
    </div>
    <div className="mt-px"><IconRow items={alignIcons} /></div>
    <div className="mx-[4px] mt-[4px] flex h-[14px] items-center border-t border-[#1a1a1a]">Distribute Layers:</div>
    <IconRow items={distributeIcons} />
  </section>
);

const App = () => (
  <div className="flex h-screen flex-col overflow-hidden bg-black font-['Roboto','Noto_Sans',sans-serif] text-[8px] leading-[10px] font-medium text-[#aaa]">
    <Toolbar />
    <div className="flex min-h-0 flex-1 gap-[3px] pt-px">
      <div className="flex min-w-0 flex-1 flex-col gap-[2px]">
        <div className="flex shrink-0 gap-[2px]">
          <EffectControls />
          <CompViewer />
        </div>
        <Timeline />
      </div>
      <aside className="flex w-[131px] shrink-0 flex-col">
        <Info />
        <Preview />
        <EffectsPresets />
        <Align />
      </aside>
    </div>
  </div>
);

export default App;
